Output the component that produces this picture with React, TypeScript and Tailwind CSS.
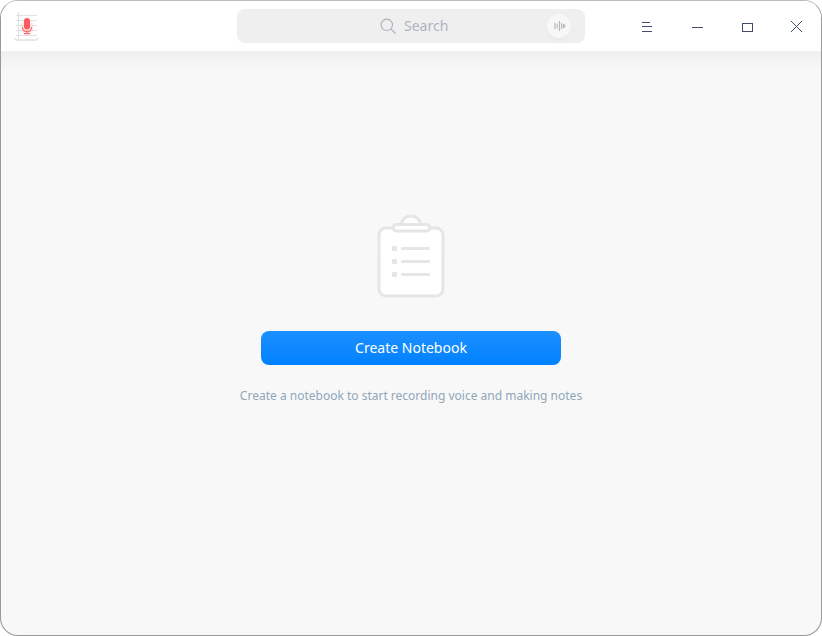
import React from "react";

function AppLogo() {
  return (
    <svg className="mt-0.5 ml-[11px]" width="30" height="32" viewBox="0 0 30 32" fill="none" aria-hidden="true">
      <path d="M2.5 27c.3 1.4 1.2 2 2.5 2h18.5c1.3 0 2.2-.6 2.5-2" stroke="#d0d0d0" />
      <path d="M4 4.5h21M4 9.5h21M4 14.5h21M4 19.5h21M4 24.5h21" stroke="#e2e2e2" />
      <path d="M6.5 1v27" stroke="#dedede" />
      <circle cx="15" cy="16" r="7" fill="#ff5a5a" opacity=".1" />
      <rect x="12" y="7" width="6" height="11.5" rx="3" fill="#fc5c5f" />
      <path d="M10.4 16c.2 3 2 4.7 4.6 4.7s4.4-1.7 4.6-4.7" stroke="#fc7375" strokeWidth="1.3" />
      <path d="M15 20.5v2M11.8 22.7h6.400" stroke="#fc6a6c" strokeWidth="1.2" />
    </svg>
  );
}

function SearchBar() {
  return (
    <div className="flex h-[34px] w-[348px] shrink-0 items-center rounded-lg bg-[#efefef] pl-[143px] pr-3.5 text-[#adb3c0]">
      <svg width="17" height="17" viewBox="0 0 17 17" fill="none" stroke="#a9afbb" strokeWidth="1.1" aria-hidden="true">
        <circle cx="6.8" cy="6.8" r="5.7" />
        <path d="m10.9 10.9 4.600 4.600" />
      </svg>
      <span className="ml-[7px] text-sm leading-5">Search</span>
      <button aria-label="Voice search" className="ml-auto flex size-6 items-center justify-center rounded-full bg-[#f7f7f7] shadow-[0_2px_4px_rgba(0,0,0,0.03)]">
        <svg width="24" height="24" viewBox="0 0 24 24" stroke="#b3b6bc" strokeWidth="1.1" aria-hidden="true">
          <path d="M8 9v6M10.2 9.5v5M12.5 7v10M14.7 9v6M16.500 10v4M17.7 10.5v3" />
        </svg>
      </button>
    </div>
  );
}

function WindowControls() {
  return (
    <div className="flex flex-1 justify-end text-[#414d68]">
      <button aria-label="Menu" className="h-[50px] w-[50px]">
        <svg width="50" height="50" viewBox="0 0 50 50" stroke="currentColor" shapeRendering="crispEdges">
          <path d="M21 21.5h8M21 25.5h10M21 30.5h10" />
        </svg>
      </button>
      <button aria-label="Minimize" className="h-[50px] w-[50px]">
        <svg width="50" height="50" viewBox="0 0 50 50" stroke="currentColor" shapeRendering="crispEdges">
          <path d="M21 26.5h11" />
        </svg>
      </button>
      <button aria-label="Maximize" className="h-[50px] w-[50px]">
        <svg width="50" height="50" viewBox="0 0 50 50" fill="none" stroke="currentColor" shapeRendering="crispEdges">
          <path d="M21.5 22.5h10v8h-10z" />
        </svg>
      </button>
      <button aria-label="Close" className="h-[50px] w-[50px]">
        <svg width="50" height="50" viewBox="0 0 50 50" stroke="currentColor" shapeRendering="crispEdges">
          <path d="m20 20 11 11M31 20 20 31" />
        </svg>
      </button>
    </div>
  );
}

function Clipboard() {
  return (
    <svg width="70" height="86" viewBox="0 0 70 86" fill="#fff" stroke="#e6e6e6" strokeWidth="3" aria-hidden="true">
      <path d="M25 13a10 10 0 0 1 20 0" />
      <rect x="3" y="15" width="64" height="68" rx="7" />
      <rect x="17" y="11.5" width="37" height="6.5" rx="3.25" />
      <g fill="#e6e6e6" stroke="none">
        <rect x="16" y="33" width="5" height="5" rx=".8" />
        <rect x="16" y="46" width="5" height="5" rx=".8" />
        <rect x="16" y="59" width="5" height="5" rx=".8" />
        <rect x="25" y="34" width="29" height="3" rx="1" />
        <rect x="25" y="47" width="29" height="3" rx="1" />
        <rect x="25" y="60" width="29" height="3" rx="1" />
      </g>
    </svg>
  );
}

export default function App() {
  return (
    <div className="h-[636px] w-[822px] bg-white font-['Noto_Sans',sans-serif]">
      <div className="flex h-full w-full flex-col overflow-hidden rounded-[18px] border border-[#999999] border-t-[#bdbdbd] bg-[#f8f8f8]">
        <header className="flex h-[50px] shrink-0 items-center bg-white">
          <div className="flex flex-1">
            <AppLogo />
          </div>
          <SearchBar />
          <WindowControls />
        </header>
        <div className="h-5 shrink-0 bg-linear-to-b from-[#efefef] to-[#f8f8f8]" />
        <main className="flex flex-1 flex-col items-center pt-[142px]">
          <Clipboard />
          <button className="mt-8 h-[34px] w-[300px] rounded-lg bg-linear-to-b from-[#1b90ff] to-[#0081ff] text-sm text-white">
            Create Notebook
          </button>
          <p className="mt-[23px] text-xs leading-4 text-[#8fa7b8]">
            Create a notebook to start recording voice and making notes
          </p>
        </main>
      </div>
    </div>
  );
}
